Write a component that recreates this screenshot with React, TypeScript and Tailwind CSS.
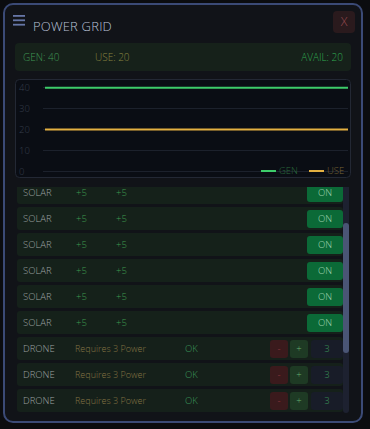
import React from "react";

const solarRows = [0, 1, 2, 3, 4, 5];
const droneRows = [0, 1, 2];

function Chart() {
  return (
    <svg width="336" height="99" viewBox="0 0 336 99" className="block">
      <rect x="0.5" y="0.5" width="335" height="98" rx="4" fill="#0a0d14" stroke="#232834" />
      {[8.5, 29.5, 50.5, 71.5, 92.5].map((y) => (
        <line key={y} x1="28" x2="333" y1={y} y2={y} stroke="#1c212c" strokeWidth="1" />
      ))}
      {[
        ["40", 8.5],
        ["30", 29.5],
        ["20", 50.5],
        ["10", 71.5],
        ["0", 92.5],
      ].map(([t, y]) => (
        <text
          key={t as string}
          x="4"
          y={(y as number) + 3.3}
          fontSize="9.5"
          fontWeight="300"
          fill="#363d4c"
          fontFamily="'Open Sans', sans-serif"
        >
          {t}
        </text>
      ))}
      <line x1="30" x2="333" y1="8.7" y2="8.7" stroke="#3dcc6a" strokeWidth="2" />
      <line x1="30" x2="333" y1="50.5" y2="50.5" stroke="#e3b041" strokeWidth="2" />
      <line x1="246" x2="261" y1="92" y2="92" stroke="#3dcc6a" strokeWidth="2" />
      <text x="264" y="95.3" fontSize="9.5" fontWeight="300" fill="#2b6b3c" fontFamily="'Open Sans', sans-serif">
        GEN
      </text>
      <line x1="294" x2="309" y1="92" y2="92" stroke="#e3b041" strokeWidth="2" />
      <text x="312" y="95.3" fontSize="9.5" fontWeight="300" fill="#7a6636" fontFamily="'Open Sans', sans-serif">
        USE
      </text>
    </svg>
  );
}

export default function App() {
  return (
    <div
      className="w-[370px] h-[429px] bg-[#0b0c0f] pt-[3px] pl-[3px] overflow-hidden"
      style={{ fontFamily: "'Open Sans', 'Noto Sans', sans-serif" }}
    >
      <div className="w-[360px] h-[420px] rounded-[10px] border-2 border-[#3b4a76] bg-[#111318] flex flex-col">
        {/* header */}
        <div className="h-[38px] flex items-start pl-[8px] pr-[6px] shrink-0">
          <svg width="12" height="11" viewBox="0 0 12 11" className="mt-[10px] shrink-0">
            <rect x="0" y="0" width="12" height="1.8" fill="#6676a6" />
            <rect x="0" y="4.4" width="12" height="1.8" fill="#6676a6" />
            <rect x="0" y="8.8" width="12" height="1.8" fill="#6676a6" />
          </svg>
          <div className="ml-[8px] mt-[12px] text-[13px] leading-[18px] font-light text-[#b9c1d6] tracking-[0.2px]">
            POWER GRID
          </div>
          <div className="ml-auto mt-[6px] w-[22px] h-[22px] rounded-[4px] bg-[#2a1a1d] flex items-center justify-center text-[12.5px] font-light text-[#9a4a52]">
            X
          </div>
        </div>
        {/* status */}
        <div className="mx-[10px] h-[28px] shrink-0 rounded-[4px] bg-[#16211a] flex items-center pl-[8px] pr-[8px] text-[10px] font-light">
          <span className="w-[72px] text-[#3f9653]">GEN: 40</span>
          <span className="text-[#8a8440]">USE: 20</span>
          <span className="ml-auto text-[#2fa851]">AVAIL: 20</span>
        </div>
        {/* chart */}
        <div className="mx-[10px] mt-[8px] h-[99px] shrink-0">
          <Chart />
        </div>
        {/* list */}
        <div className="ml-[12px] mr-[12px] mt-[9px] h-[228px] shrink-0 flex overflow-hidden">
          <div className="flex-1 overflow-hidden">
            <div className="-mt-[6px] flex flex-col gap-[3px]">
              {solarRows.map((i) => (
                <div key={"s" + i} className="h-[23px] rounded-[3px] bg-[#15211a] flex items-center pl-[6px] text-[9.5px] leading-none font-light">
                  <span className="w-[53px] text-[#9ea3a2]">SOLAR</span>
                  <span className="w-[40px] text-[#3e9a4e]">+5</span>
                  <span className="text-[#3e9a4e]">+5</span>
                  <div className="ml-auto w-[36px] h-[18px] rounded-[3px] bg-[#0b6a37] flex items-center justify-center text-[#a6d6b4]">
                    ON
                  </div>
                </div>
              ))}
              {droneRows.map((i) => (
                <div key={"d" + i} className="h-[23px] rounded-[3px] bg-[#15201a] flex items-center pl-[6px] text-[9.5px] leading-none font-light">
                  <span className="w-[52px] text-[#9ea3a2]">DRONE</span>
                  <span className="w-[110px] text-[#857444] text-[9px]">Requires 3 Power</span>
                  <span className="text-[#3c9a5a]">OK</span>
                  <div className="ml-auto w-[18px] h-[18px] rounded-[3px] bg-[#3a1a1c] flex items-center justify-center text-[#a04048]">
                    -
                  </div>
                  <div className="ml-[2px] w-[18px] h-[18px] rounded-[3px] bg-[#1e3a24] flex items-center justify-center text-[#66b070]">
                    +
                  </div>
                  <div className="ml-[3px] w-[32px] h-[18px] rounded-[3px] bg-[#181c28] flex items-center justify-center text-[#3c9a5a]">
                    3
                  </div>
                </div>
              ))}
              <div className="h-[23px] rounded-[3px] bg-[#15201a]" />
            </div>
          </div>
          <div className="w-[6px] h-[226px] bg-[#1d2130] rounded-b-[3px] flex flex-col">
            <div className="mt-[36px] h-[130px] w-[6px] rounded-[3px] bg-[#4a5575]" />
          </div>
        </div>
      </div>
    </div>
  );
}
